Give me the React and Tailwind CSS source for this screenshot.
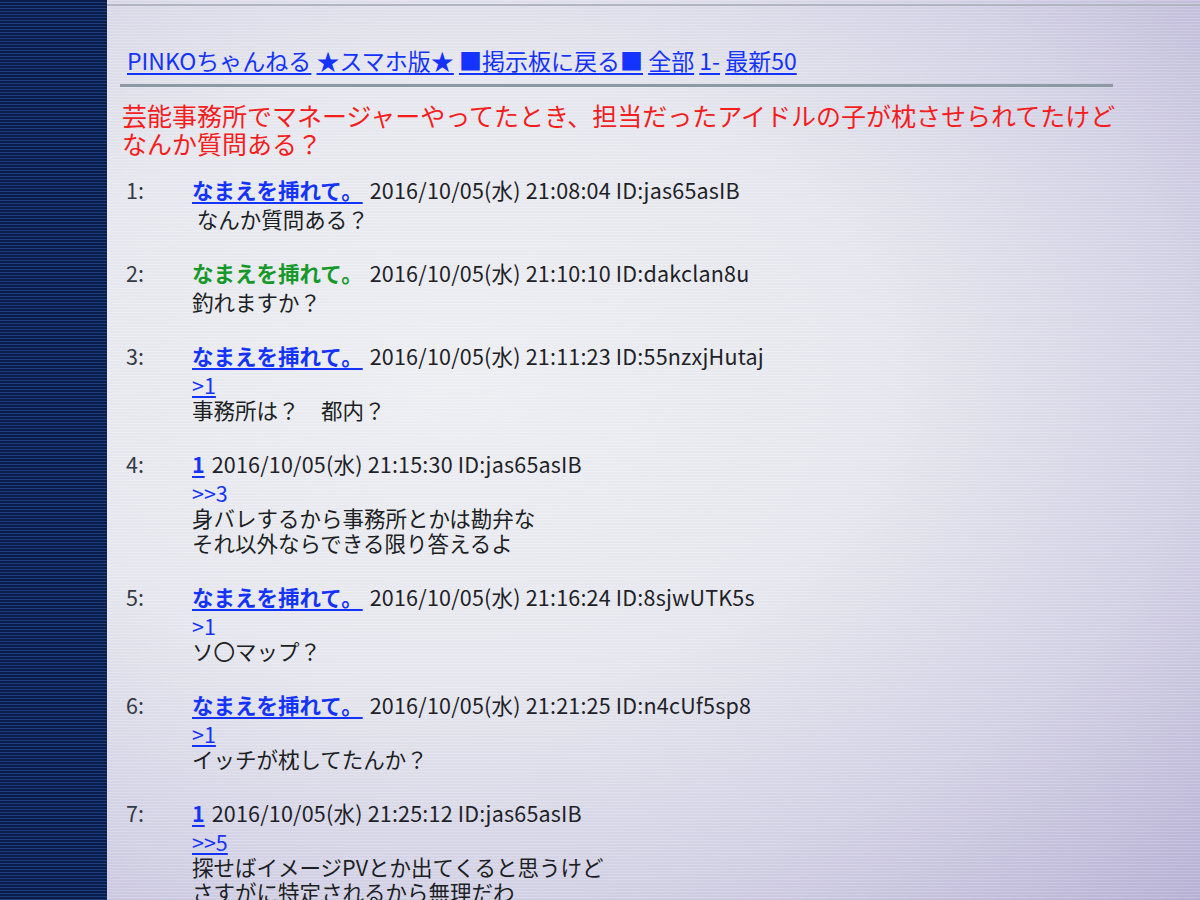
import React from 'react';

const posts = [
  { no: 1, name: 'なまえを挿れて。', kind: 'link', date: '2016/10/05(水) 21:08:04 ID:jas65asIB', lines: ['\u00a0なんか質問ある？'] },
  { no: 2, name: 'なまえを挿れて。', kind: 'green', date: '2016/10/05(水) 21:10:10 ID:dakclan8u', lines: ['釣れますか？'] },
  { no: 3, name: 'なまえを挿れて。', kind: 'link', date: '2016/10/05(水) 21:11:23 ID:55nzxjHutaj', anchor: '>1', anchorLink: true, lines: ['事務所は？\u3000都内？'] },
  { no: 4, name: '1', kind: 'link', date: '2016/10/05(水) 21:15:30 ID:jas65asIB', anchor: '>>3', anchorLink: false, lines: ['身バレするから事務所とかは勘弁な', 'それ以外ならできる限り答えるよ'] },
  { no: 5, name: 'なまえを挿れて。', kind: 'link', date: '2016/10/05(水) 21:16:24 ID:8sjwUTK5s', anchor: '>1', anchorLink: false, lines: ['ソ〇マップ？'] },
  { no: 6, name: 'なまえを挿れて。', kind: 'link', date: '2016/10/05(水) 21:21:25 ID:n4cUf5sp8', anchor: '>1', anchorLink: true, lines: ['イッチが枕してたんか？'] },
  { no: 7, name: '1', kind: 'link', date: '2016/10/05(水) 21:25:12 ID:jas65asIB', anchor: '>>5', anchorLink: true, lines: ['探せばイメージPVとか出てくると思うけど', 'さすがに特定されるから無理だわ'] },
];

function Post({ post }) {
  return (
    <div className="mb-[26px]">
      <div className="flex items-baseline leading-[32px]">
        <span className="w-[72px] shrink-0 pl-[6px] text-[#333a44]">{post.no}:</span>
        {post.kind === 'green' ? (
          <span className="font-bold text-[#17982a]">{post.name}</span>
        ) : (
          <a href="#" className="font-bold text-[#1533ff] underline decoration-2 underline-offset-[3px]">{post.name}</a>
        )}
        <span className="ml-[7px] tracking-[0.2px] text-[#1e2228]">{post.date}</span>
      </div>
      <div className="ml-[72px] leading-[25px] text-[#1c1f24]">
        {post.anchor && (
          <div>
            {post.anchorLink ? (
              <a href="#" className="text-[#1533ff] underline underline-offset-[2px]">{post.anchor}</a>
            ) : (
              <span className="text-[#1533ff]">{post.anchor}</span>
            )}
          </div>
        )}
        {post.lines.map((l, i) => (
          <div key={i}>{l}</div>
        ))}
      </div>
    </div>
  );
}

export default function App() {
  return (
    <div className="flex h-screen w-full overflow-hidden font-['Noto_Sans_CJK_JP','Noto_Sans',sans-serif]">
      <div className="w-[107px] shrink-0 bg-[repeating-linear-gradient(to_bottom,#0a1c4a_0px,#0a1c4a_2px,#1d3d7e_2px,#1d3d7e_3px)]" />
      <div className="relative flex-1 bg-[radial-gradient(ellipse_at_32%_42%,#eceef2_0%,#e6e7ee_40%,#d2d0e4_70%,#b6b0d4_100%)]">
        <div className="pointer-events-none absolute inset-0 bg-[repeating-linear-gradient(to_bottom,rgba(255,255,255,0.18)_0px,rgba(255,255,255,0.18)_1px,transparent_1px,transparent_3px)]" />
        <div className="relative">
          <div className="mt-[4px] h-[2px] bg-[#b0b5c1]" />
          <div className="ml-[13px] w-[993px]">
            <div className="mt-[39px] pl-[7px] text-[23px] leading-[30px] text-[#1533ff]">
              <a href="#" className="underline underline-offset-[3px]">PINKOちゃんねる</a>{' '}
              <a href="#" className="underline underline-offset-[3px]">★スマホ版★</a>{' '}
              <a href="#" className="underline underline-offset-[3px]">■掲示板に戻る■</a>{' '}
              <a href="#" className="underline underline-offset-[3px]">全部</a>{' '}
              <a href="#" className="underline underline-offset-[3px]">1-</a>{' '}
              <a href="#" className="underline underline-offset-[3px]">最新50</a>
            </div>
            <div className="mt-[9px] h-[3px] bg-[#8e9aa3]" />
            <h1 className="mt-[14px] mb-[17px] w-[1010px] pl-[2px] text-[25px] leading-[28px] font-normal text-[#f41e1e]">
              芸能事務所でマネージャーやってたとき、担当だったアイドルの子が枕させられてたけどなんか質問ある？
            </h1>
            <div className="text-[21.5px]">
              {posts.map((p) => (
                <Post key={p.no} post={p} />
              ))}
            </div>
          </div>
        </div>
      </div>
    </div>
  );
}
